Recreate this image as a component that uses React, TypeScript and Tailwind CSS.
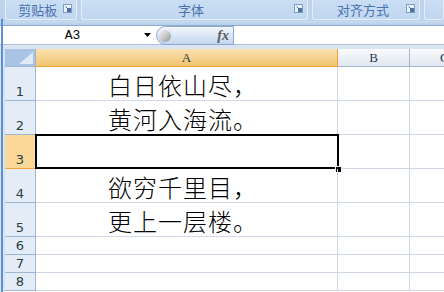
import React from "react";

const rows = [
  { n: "1", text: "白日依山尽，", h: "h-[34px]" },
  { n: "2", text: "黄河入海流。", h: "h-[34px]" },
  { n: "3", text: "", h: "h-[34px]", active: true },
  { n: "4", text: "欲穷千里目，", h: "h-[34px]" },
  { n: "5", text: "更上一层楼。", h: "h-[34px]" },
  { n: "6", text: "", h: "h-[18px]" },
  { n: "7", text: "", h: "h-[18px]" },
  { n: "8", text: "", h: "h-[18px]" },
];

function Launcher() {
  return (
    <svg width="9" height="9" viewBox="0 0 9 9" className="shrink-0">
      <rect x="0.5" y="0.5" width="8" height="8" fill="#e9f1fb" stroke="#7f9cc4" />
      <rect x="4" y="4" width="4" height="4" fill="#4f6f9c" />
      <path d="M2.5 2.5 L5 5" stroke="#4f6f9c" strokeWidth="1" />
    </svg>
  );
}

function Group({ label, width, launcher = true }: { label: string; width: string; launcher?: boolean }) {
  return (
    <div
      className={`${width} h-[20px] flex items-center justify-center relative bg-gradient-to-b from-[#cadef4] to-[#c1d7f0] border-x border-b border-[#e3eefa] rounded-b-[3px]`}
    >
      <span className="text-[13px] leading-none text-[#4a70ad] font-['Noto_Sans_CJK_SC',sans-serif] -translate-x-[3px]">{label}</span>
      {launcher && (
        <span className="absolute right-[4px] top-[4px]">
          <Launcher />
        </span>
      )}
    </div>
  );
}

export default function App() {
  return (
    <div className="w-[444px] h-[292px] overflow-hidden bg-[#dbe6f4] flex flex-col">
      {/* ribbon group labels */}
      <div className="h-[21px] flex gap-[4px] pl-[5px] bg-[#bfd3ec]">
        <Group label="剪贴板" width="w-[73px]" />
        <Group label="字体" width="w-[232px]" />
        <Group label="对齐方式" width="w-[111px]" />
        <Group label="" width="w-[20px]" launcher={false} />
      </div>
      <div className="h-[5px] bg-gradient-to-b from-[#c9dcf2] to-[#b7cde9] border-b border-[#8eabd2]" />

      {/* formula bar */}
      <div className="h-[19px] flex bg-white border-b border-[#aac0de]">
        <div className="w-[156px] pl-[5px] flex items-center">
          <span className="flex-1 text-center text-[13px] leading-none font-['Liberation_Mono',monospace] text-black pr-[4px]">
            A3
          </span>
          <svg width="8" height="5" viewBox="0 0 8 5" className="mr-[4px]">
            <path d="M0 0 H7 L3.5 4 Z" fill="#000" />
          </svg>
        </div>
        <div className="w-[78px] h-[19px] flex items-center justify-between rounded-l-full border border-[#8fa9cc] bg-gradient-to-b from-[#f2f6fc] via-[#dbe7f6] to-[#c3d6ee]">
          <div className="ml-[2px] w-[12px] h-[12px] rounded-full bg-gradient-to-br from-[#f4f4f4] via-[#c9c9c9] to-[#8f9296]" />
          <span className="mr-[4px] text-[14px] leading-none italic font-bold font-['Liberation_Serif',serif] text-[#5a5a5a]">fx</span>
        </div>
        <div className="flex-1 bg-white" />
      </div>
      <div className="h-[4px] bg-[#dbe5f2]" />

      {/* grid */}
      <div className="flex-1 flex border-l-[5px] border-[#d6e3f4] relative">
        <div className="absolute left-[-4px] top-[-30px] bottom-0 w-[2px] bg-[#5b8fd6]" />
        <div className="flex-1 flex flex-col bg-white">
          {/* header row */}
          <div className="h-[18px] flex shrink-0">
            <div className="w-[31px] bg-[#a9c3e6] border-r border-b border-[#9eb6ce] relative">
              <svg width="14" height="12" viewBox="0 0 14 12" className="absolute right-[2px] bottom-[2px]">
                <path d="M14 0 V12 H0 Z" fill="#e1e9f4" />
              </svg>
            </div>
            <div className="w-[302px] flex items-center justify-center bg-gradient-to-b from-[#fae1b0] to-[#f2c46f] border-r border-b border-[#f2a23c]">
              <span className="text-[13px] leading-none font-['Liberation_Serif',serif] text-[#1f3b4d]">A</span>
            </div>
            <div className="w-[72px] flex items-center justify-center bg-gradient-to-b from-[#f9fafc] to-[#e1e7f0] border-r border-b border-[#9eb6ce]">
              <span className="text-[13px] leading-none font-['Liberation_Serif',serif] text-[#1f3b4d]">B</span>
            </div>
            <div className="flex-1 flex items-center bg-gradient-to-b from-[#f9fafc] to-[#e1e7f0] border-b border-[#9eb6ce] overflow-hidden">
              <span className="text-[13px] leading-none font-['Liberation_Serif',serif] text-[#1f3b4d] ml-[30px]">C</span>
            </div>
          </div>
          {rows.map((r) => (
            <div key={r.n} className={`${r.h} flex shrink-0`}>
              <div
                className={`w-[31px] flex items-end justify-center pb-[1px] border-r border-b ${
                  r.active ? "bg-[#f9d898] border-[#f2a23c]" : "bg-[#e4ecf7] border-[#9eb6ce]"
                }`}
              >
                <span className="text-[13px] leading-[15px] font-['DejaVu_Sans',sans-serif] text-[#27413e]">{r.n}</span>
              </div>
              <div className="w-[302px] relative flex items-end border-r border-b border-[#d0d7e5] pl-[72px] pb-[3px]">
                {r.text && (
                  <span className="text-[24px] leading-[24px] tracking-[1px] font-light text-black font-['Noto_Sans_CJK_SC',sans-serif] whitespace-nowrap">
                    {r.text}
                  </span>
                )}
                {r.active && (
                  <>
                    <div className="absolute left-[-1px] top-[-1px] right-[-2px] bottom-[-1px] border-[2px] border-black" />
                    <div className="absolute right-[-5px] bottom-[-5px] w-[7px] h-[7px] bg-black border border-white" />
                  </>
                )}
              </div>
              <div className="w-[72px] border-r border-b border-[#d0d7e5]" />
              <div className="flex-1 border-b border-[#d0d7e5]" />
            </div>
          ))}
        </div>
      </div>
    </div>
  );
}
